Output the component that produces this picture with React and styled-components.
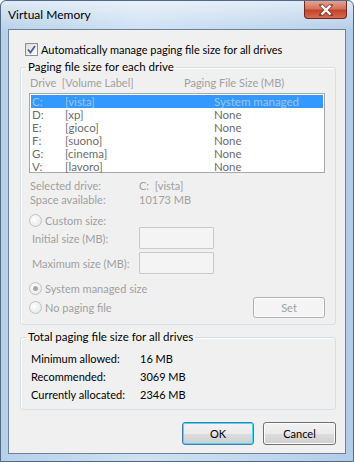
import React from 'react';
import styled, { createGlobalStyle } from 'styled-components';

const GlobalStyle = createGlobalStyle`
  html, body {
    margin: 0;
    padding: 0;
    background: #ffffff;
  }
  body {
    font-family: Lato, "Noto Sans", sans-serif;
    font-size: 11px;
    color: #000;
  }
`;

const DRIVES = [
  { letter: 'C:', label: '[vista]', size: 'System managed' },
  { letter: 'D:', label: '[xp]', size: 'None' },
  { letter: 'E:', label: '[gioco]', size: 'None' },
  { letter: 'F:', label: '[suono]', size: 'None' },
  { letter: 'G:', label: '[cinema]', size: 'None' },
  { letter: 'V:', label: '[lavoro]', size: 'None' },
];

const TOTALS = [
  { name: 'Minimum allowed:', value: '16 MB' },
  { name: 'Recommended:', value: '3069 MB' },
  { name: 'Currently allocated:', value: '2346 MB' },
];

// aero glass frame around the whole dialog
const Frame = styled.div`
  width: 354px;
  height: 462px;
  box-sizing: border-box;
  display: flex;
  flex-direction: column;
  border: 1px solid #4f6a86;
  border-radius: 6px 6px 0 0;
  background:
    linear-gradient(180deg, rgba(255, 255, 255, 0.55) 0%, rgba(255, 255, 255, 0) 30px),
    linear-gradient(90deg, #b7d0ea 0%, #cfe0f2 40%, #c3d8ee 70%, #b3cce8 100%);
  overflow: hidden;
  white-space: nowrap;
`;

const TitleBar = styled.div`
  height: 28px;
  display: flex;
  align-items: flex-start;
  padding-left: 7px;
`;

const Title = styled.div`
  margin-top: 6px;
  font-size: 12px;
  color: #000;
`;

const CloseButton = styled.div`
  margin-left: auto;
  margin-right: 6px;
  width: 43px;
  height: 18px;
  box-sizing: border-box;
  border: 1px solid #6b2a22;
  border-top: none;
  border-radius: 0 0 4px 4px;
  background: linear-gradient(180deg, #e4a394 0%, #d5705c 45%, #c2442c 55%, #d86a4f 100%);
  display: flex;
  align-items: center;
  justify-content: center;
`;

const Client = styled.div`
  flex: 1;
  margin: 0 7px 7px 7px;
  border: 1px solid #6c819b;
  background: #f0f0f0;
  padding: 11px 9px 0 11px;
  display: flex;
  flex-direction: column;
`;

const CheckRow = styled.label`
  display: flex;
  align-items: center;
  gap: 3px;
  height: 16px;
  margin-left: 5px;
`;

const CheckBox = styled.span`
  width: 11px;
  height: 11px;
  border: 1px solid #8f8f8f;
  background: linear-gradient(135deg, #dcdcdc, #fdfdfd);
  display: flex;
  align-items: center;
  justify-content: center;
`;

const Group = styled.fieldset`
  margin: ${p => p.$top}px 0 0 0;
  padding: 0 10px 0 8px;
  border: 1px solid #d5dfe5;
  border-radius: 3px;
  box-shadow: inset 1px 1px 0 #fff;
  height: ${p => p.$height}px;
  box-sizing: border-box;
  min-width: 0;
`;

const Legend = styled.legend`
  padding: 0 2px;
  margin-left: -3px;
  line-height: 14px;
  font-size: 11.5px;
`;

const Dim = styled.div`
  color: #a0a0a0;
`;

const ColumnHeader = styled(Dim)`
  display: flex;
  height: 16px;
  align-items: center;
  padding-left: 1px;
`;

const HeaderDrive = styled.span`
  width: 154px;
`;

const ListBox = styled.div`
  margin-top: 3px;
  height: 80px;
  box-sizing: border-box;
  border: 1px solid #a8a8a8;
  background: #fff;
  padding: 1px 1px;
`;

const ListRow = styled.div`
  display: grid;
  grid-template-columns: 33px 149px 1fr;
  height: 13px;
  line-height: 13px;
  padding-left: 1px;
  font-size: 11.5px;
  color: ${p => (p.$selected ? '#9fc3ec' : '#6d6d6d')};
  background: ${p => (p.$selected ? '#3399ff' : 'transparent')};
`;

const InfoGrid = styled(Dim)`
  margin-top: 5px;
  display: grid;
  grid-template-columns: 109px 1fr;
  grid-auto-rows: 14px;
  align-items: center;
  padding-left: 1px;
`;

const RadioRow = styled.div`
  display: flex;
  align-items: center;
  gap: 3px;
  height: 18px;
  color: #a0a0a0;
  margin-top: ${p => p.$top || 0}px;
`;

const Radio = styled.span`
  width: 11px;
  height: 11px;
  border-radius: 50%;
  border: 1px solid #c2c2c2;
  background: radial-gradient(circle at 40% 40%, #ffffff, #e3e3e3);
  display: flex;
  align-items: center;
  justify-content: center;
`;

const RadioDot = styled.span`
  width: 5px;
  height: 5px;
  border-radius: 50%;
  background: #a8a8a8;
`;

const SizeRow = styled.div`
  display: flex;
  align-items: center;
  height: 22px;
  margin-top: ${p => p.$top}px;
  padding-left: 3px;
  color: #a0a0a0;
`;

const SizeLabel = styled.span`
  width: 107px;
`;

const SizeInput = styled.div`
  width: 75px;
  height: 22px;
  box-sizing: border-box;
  border: 1px solid #c9c9c9;
  background: #f4f4f4;
  border-radius: 1px;
`;

const BottomRow = styled.div`
  display: flex;
  align-items: flex-start;
  justify-content: space-between;
`;

const Button = styled.div`
  width: ${p => p.$w}px;
  height: ${p => p.$h}px;
  margin-top: ${p => p.$top || 0}px;
  box-sizing: border-box;
  border-radius: 3px;
  display: flex;
  align-items: center;
  justify-content: center;
  border: 1px solid ${p => (p.$default ? '#3c7fb1' : p.$disabled ? '#adb2b5' : '#707070')};
  box-shadow: inset 0 0 0 1px ${p => (p.$default ? '#48d8fb' : '#fcfcfc')};
  color: ${p => (p.$disabled ? '#a0a0a0' : '#000')};
  background: ${p =>
    p.$disabled
      ? '#f4f4f4'
      : 'linear-gradient(180deg, #f2f2f2 0%, #ebebeb 50%, #dddddd 51%, #cfcfcf 100%)'};
`;

const TotalsGrid = styled.div`
  display: grid;
  grid-template-columns: 109px 1fr;
  grid-auto-rows: 18px;
  align-items: center;
  padding-left: 2px;
  margin-top: 5px;
`;

const Actions = styled.div`
  display: flex;
  justify-content: flex-end;
  gap: 9px;
  margin-top: 12px;
`;

export default function App() {
  return (
    <>
      <GlobalStyle />
      <Frame>
        <TitleBar>
          <Title>Virtual Memory</Title>
          <CloseButton>
            <svg width="14" height="12" viewBox="0 0 14 12">
              <path d="M2 1 L12 11 M12 1 L2 11" stroke="#5a1d14" strokeWidth="4" strokeLinecap="square" opacity="0.5" />
              <path d="M2.5 1.5 L11.5 10.5 M11.5 1.5 L2.5 10.5" stroke="#fff" strokeWidth="2.4" />
            </svg>
          </CloseButton>
        </TitleBar>
        <Client>
          <CheckRow>
            <CheckBox>
              <svg width="9" height="9" viewBox="0 0 9 9">
                <path d="M1 4.5 L3.5 7.5 L8 1" fill="none" stroke="#4a5f97" strokeWidth="1.8" />
              </svg>
            </CheckBox>
            Automatically manage paging file size for all drives
          </CheckRow>

          <Group $top={3} $height={265}>
            <Legend>Paging file size for each drive</Legend>
            <ColumnHeader>
              <HeaderDrive>Drive&nbsp; [Volume Label]</HeaderDrive>
              <span>Paging File Size (MB)</span>
            </ColumnHeader>
            <ListBox>
              {DRIVES.map((d, i) => (
                <ListRow key={d.letter} $selected={i === 0}>
                  <span>{d.letter}</span>
                  <span>{d.label}</span>
                  <span>{d.size}</span>
                </ListRow>
              ))}
            </ListBox>
            <InfoGrid>
              <span>Selected drive:</span>
              <span>C:&nbsp; [vista]</span>
              <span>Space available:</span>
              <span>10173 MB</span>
            </InfoGrid>
            <RadioRow $top={5}>
              <Radio />
              Custom size:
            </RadioRow>
            <SizeRow $top={-2}>
              <SizeLabel>Initial size (MB):</SizeLabel>
              <SizeInput />
            </SizeRow>
            <SizeRow $top={3}>
              <SizeLabel>Maximum size (MB):</SizeLabel>
              <SizeInput />
            </SizeRow>
            <BottomRow>
              <div>
                <RadioRow $top={5}>
                  <Radio>
                    <RadioDot />
                  </Radio>
                  System managed size
                </RadioRow>
                <RadioRow $top={1}>
                  <Radio />
                  No paging file
                </RadioRow>
              </div>
              <Button $w={72} $h={21} $top={23} $disabled>
                Set
              </Button>
            </BottomRow>
          </Group>

          <Group $top={5} $height={80}>
            <Legend>Total paging file size for all drives</Legend>
            <TotalsGrid>
              {TOTALS.map(t => (
                <React.Fragment key={t.name}>
                  <span>{t.name}</span>
                  <span>{t.value}</span>
                </React.Fragment>
              ))}
            </TotalsGrid>
          </Group>

          <Actions>
            <Button $w={72} $h={23} $default>OK</Button>
            <Button $w={73} $h={23}>Cancel</Button>
          </Actions>
        </Client>
      </Frame>
    </>
  );
}
